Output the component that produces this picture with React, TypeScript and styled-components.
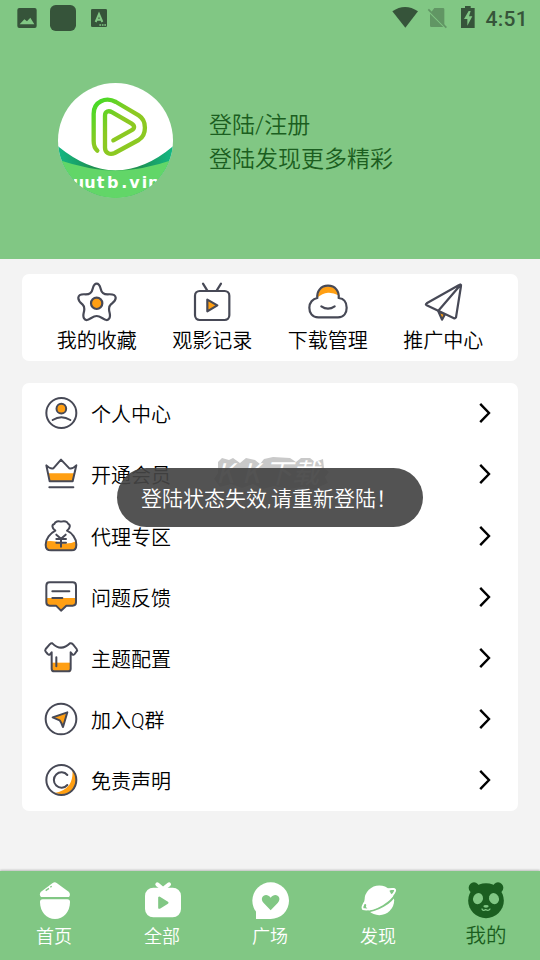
import React from 'react';
import styled, { createGlobalStyle } from 'styled-components';

const green = '#81c784';
const deep = '#1b5e20';
const ink = '#474956';
const orange = '#ff9f13';
const status = '#36543a';

const GlobalStyle = createGlobalStyle`
  * { box-sizing: border-box; }
  html, body { margin: 0; padding: 0; }
  body {
    font-family: Roboto, 'Noto Sans CJK SC', sans-serif;
    font-weight: 350;
    background: #f3f3f3;
    overflow: hidden;
  }
`;

const Screen = styled.div`
  position: relative;
  width: 540px;
  height: 960px;
  display: flex;
  flex-direction: column;
  background: #f3f3f3;
`;

const Header = styled.header`
  height: 259px;
  flex: none;
  background: ${green};
`;

const StatusBar = styled.div`
  height: 36px;
  padding: 0 12px 0 17px;
  display: flex;
  align-items: center;
  justify-content: space-between;
`;

const StatusGroup = styled.div`
  display: flex;
  align-items: center;
`;

const Clock = styled.span`
  margin-left: 10px;
  font: 500 21px/36px Roboto, sans-serif;
  letter-spacing: 0.3px;
  color: ${status};
  padding-top: 2px;
`;

const Profile = styled.div`
  display: flex;
  align-items: center;
  padding: 47px 0 0 58px;
  gap: 36px;
`;

const ProfileText = styled.div`
  font-size: 23px;
  line-height: 34px;
  color: ${deep};
  padding-top: 4px;
`;

const Card = styled.section`
  margin: 0 22px;
  background: #fff;
  border-radius: 7px;
  flex: none;
`;

const QuickCard = styled(Card)`
  margin-top: 14.5px;
  height: 87.5px;
  padding: 8.5px 17px 0;
  display: grid;
  grid-template-columns: repeat(4, 1fr);
`;

const QuickItem = styled.div`
  display: flex;
  flex-direction: column;
  align-items: center;
  font-size: 20px;
  line-height: 28px;
  color: #000;
  gap: 5px;
`;

const MenuCard = styled(Card)`
  margin-top: 21.7px;
  height: 428px;
  display: flex;
  flex-direction: column;
`;

const MenuRow = styled.div`
  flex: 1;
  display: flex;
  align-items: center;
  padding: 0 26px 0 21px;
`;

const MenuLabel = styled.span`
  flex: 1;
  margin-left: 12px;
  font-size: 20px;
  line-height: 30px;
  color: #000;
  padding-top: 4px;
`;

const Watermark = styled.svg`
  position: absolute;
  left: 211px;
  top: 455px;
`;

const Toast = styled.div`
  position: absolute;
  left: 117px;
  top: 468px;
  width: 306px;
  height: 59px;
  padding-left: 24px;
  border-radius: 30px;
  background: rgba(68, 68, 68, 0.92);
  color: #fff;
  font-size: 21px;
  line-height: 62px;
  white-space: nowrap;
`;

const TabBar = styled.nav`
  margin-top: auto;
  height: 89px;
  flex: none;
  display: grid;
  grid-template-columns: repeat(5, 1fr);
  background: ${green};
  box-shadow: 0 -1px 2px rgba(0, 0, 0, 0.22);
`;

const Tab = styled.div<{ $active?: boolean }>`
  display: flex;
  flex-direction: column;
  align-items: center;
  padding-top: 9px;
  font-size: ${(p) => (p.$active ? 20.5 : 18)}px;
  line-height: ${(p) => (p.$active ? 32 : 34)}px;
  color: ${(p) => (p.$active ? deep : '#fff')};
`;

const Line = styled.svg.attrs<{ $w: number }>((p) => ({ strokeWidth: p.$w }))<{ $w: number }>`
  display: block;
  flex: none;
  fill: none;
  stroke: ${ink};
  stroke-linecap: round;
  stroke-linejoin: round;
  .fill { fill: ${orange}; }
  .tint { fill: ${orange}; stroke: none; }
`;

const Glyph = styled.svg`
  display: block;
  flex: none;
`;

const QuickIcon = ({ children }: { children: React.ReactNode }) => (
  <Line $w={6.6} width="40" height="40" viewBox="0 0 120 120">{children}</Line>
);
const MenuIcon = ({ children }: { children: React.ReactNode }) => (
  <Line $w={6} width="36" height="36" viewBox="0 0 108 108">{children}</Line>
);
const TabIcon = ({ children }: { children: React.ReactNode }) => (
  <Glyph width="40" height="40" viewBox="0 0 120 120" fill="currentColor">{children}</Glyph>
);

const Avatar = () => (
  <Glyph width="115" height="115" viewBox="0 0 345 345">
    <defs>
      <clipPath id="disc"><circle cx="172.5" cy="172.5" r="172.5" /></clipPath>
      <clipPath id="word"><rect x="46" y="270" width="257" height="48" /></clipPath>
      <linearGradient id="mark" x1="0" y1="0" x2="0.7" y2="0.8">
        <stop offset="0" stopColor="#3fdc28" />
        <stop offset="0.6" stopColor="#8cc922" />
        <stop offset="1" stopColor="#8cc922" />
      </linearGradient>
      <linearGradient id="ribbon" x1="0" y1="0" x2="1" y2="0">
        <stop offset="0" stopColor="#14b884" />
        <stop offset="0.32" stopColor="#1e8e50" />
        <stop offset="0.5" stopColor="#4fc45c" />
        <stop offset="0.68" stopColor="#1e8e50" />
        <stop offset="1" stopColor="#14b884" />
      </linearGradient>
    </defs>
    <g clipPath="url(#disc)">
      <rect width="345" height="345" fill="#fff" />
      <path d="M0 190Q88 262 172 262Q260 262 345 190V345H0Z" fill="url(#ribbon)" />
      <path d="M0 230Q90 260 172 264Q258 260 345 230V345H0Z" fill="#62d668" />
      <g clipPath="url(#word)">
        <text x="44 79 116 147 190 214 251 270" y="316" fontFamily="'DejaVu Sans', sans-serif" fontWeight="700" fontSize="48" fill="#fff">uutb.vip</text>
      </g>
    </g>
    <path d="M118 203C109 195 107 188 107 174V92C107 56 143 40 174 57L242 97C267 113 267 155 242 171L170 210C155 217 141 209 141 194V98C141 84 152 82 163 88L220 121C231 128 231 136 220 142L166 172" fill="none" stroke="url(#mark)" strokeWidth="13" strokeLinejoin="round" strokeLinecap="round" />
  </Glyph>
);

const quick = [
  {
    label: '我的收藏',
    icon: (
      <>
        <path d="M59 5C66 5 68 9 71 20C74 34 80 37 92 37C104 36 115 37 116 47C117 57 108 62 101 68C94 74 95 82 98 93C101 106 96 115 88 114C80 113 70 102 59 102C48 102 38 113 30 114C22 115 17 106 20 93C23 82 24 74 17 68C10 62 3 57 4 47C5 37 14 36 26 37C38 37 44 34 47 20C50 9 52 5 59 5Z" />
        <circle className="fill" cx="59" cy="64" r="17" />
      </>
    ),
  },
  {
    label: '观影记录',
    icon: (
      <>
        <rect x="9" y="27" width="103" height="87" rx="14" />
        <path d="M33 5L46 26M87 5L74 26" />
        <path className="fill" d="M46 53V88L76 70Z" />
      </>
    ),
  },
  {
    label: '下载管理',
    icon: (
      <>
        <path className="tint" d="M29 46C31 24 40 13 60 13C80 13 89 24 91 40Q76 31 60 32Q42 34 29 46Z" />
        <path d="M31 106C12 106 4 92 4 77C4 62 14 50 28 48C26 28 38 11 60 11C82 11 94 28 92 48C108 50 116 62 116 77C116 92 108 106 90 106Z" />
        <path d="M40 73Q60 87 80 73" />
      </>
    ),
  },
  {
    label: '推广中心',
    icon: (
      <>
        <path className="fill" d="M46 88L57 113L66 97Z" />
        <path fill="#fff" d="M113 8Q111 7 107 10L11 64Q6 67 11 70L93 109Q97 110 99 106L114 12Q115 9 113 8L46 86" />
      </>
    ),
  },
];

const menu = [
  {
    label: '个人中心',
    icon: (
      <>
        <circle cx="55" cy="54" r="45" />
        <circle className="fill" cx="55" cy="41" r="14.5" />
        <path d="M29 75Q55 59 82 75" />
      </>
    ),
  },
  {
    label: '开通会员',
    icon: (
      <>
        <path className="tint" d="M16 52H95L89 75H21Z" />
        <path d="M10 28L20 76H89L100 28Q88 40 79 37L54 11L31 37Q22 40 10 28ZM19 94H91" />
      </>
    ),
  },
  {
    label: '代理专区',
    icon: (
      <>
        <path className="tint" d="M9 70Q31 66 54 75Q78 80 99 70Q104 96 86 97H24Q5 96 9 70Z" />
        <path d="M37 38C26 30 26 20 34 18C36 10 46 8 54 11C64 8 74 10 75 17C83 20 82 30 72 38C86 44 101 62 100 80C100 92 95 97 86 97H24C14 97 8 92 8 80C8 62 22 46 37 38Z" />
        <path d="M40 50L54 62L68 50M54 62V86M40 63H69M40 74H69" />
      </>
    ),
  },
  {
    label: '问题反馈',
    icon: (
      <>
        <path className="tint" d="M10 57H99V72Q99 80 91 80H70L54 95L39 80H18Q10 80 10 72Z" />
        <path d="M20 10H89Q99 10 99 20V70Q99 80 89 80H70L54 95L39 80H20Q10 80 10 70V20Q10 10 20 10ZM28 37H79M28 57H58" />
      </>
    ),
  },
  {
    label: '主题配置',
    icon: (
      <>
        <path className="tint" d="M26 68H83V94H26Z" />
        <path d="M28 10Q54 36 81 10Q86 9 90 13L101 27Q104 31 100 35L95 42Q92 46 88 43L83 37V86Q83 94 75 94H34Q26 94 26 86V37L21 43Q17 46 14 42L8 35Q5 31 8 27L20 13Q24 9 28 10ZM40 52V79" />
      </>
    ),
  },
  {
    label: '加入Q群',
    icon: (
      <>
        <circle cx="54" cy="54" r="46" />
        <path className="fill" d="M29 49L73 34L60 78L55 66L50 58Z" />
      </>
    ),
  },
  {
    label: '免责声明',
    icon: (
      <>
        <path className="tint" d="M88 22Q109 43 95 75Q76 105 34 93Q63 89 79 68Q91 50 88 22Z" />
        <circle cx="55" cy="54" r="45" />
        <path d="M73 39A23 23 0 1 0 73 69" />
      </>
    ),
  },
];

const tabs = [
  {
    label: '首页',
    icon: (
      <>
        <path d="M56 9Q62 5 68 9L104 35Q111 43 105 51H21Q14 43 21 35Z" />
        <path d="M18 66Q18 58 26 58H100Q108 58 108 66C108 96 88 117 63 117C38 117 18 96 18 66Z" />
        <path d="M35 32L45 25M49 22L53 19" stroke={green} strokeWidth="4" />
      </>
    ),
  },
  {
    label: '全部',
    icon: (
      <>
        <rect x="9" y="23" width="108" height="89" rx="25" />
        <path d="M46 13L63 27L81 13" fill="none" stroke="currentColor" strokeWidth="12" strokeLinecap="round" />
        <path d="M52 53V83L76 68Z" fill={green} stroke={green} strokeWidth="7" strokeLinejoin="round" />
      </>
    ),
  },
  {
    label: '广场',
    icon: (
      <>
        <circle cx="62" cy="62" r="55" />
        <path d="M18 62V117H62Z" />
        <path d="M62 91L41 69C25 51 49 34 62 53C75 34 99 51 83 69Z" fill={green} />
      </>
    ),
  },
  {
    label: '发现',
    icon: (
      <>
        <circle cx="64" cy="61" r="44.5" />
        <path d="M20 95Q47 95 76 78Q103 62 113 42" fill="none" stroke={green} strokeWidth="6" />
        <path d="M24 62Q9 82 15 87Q40 93 76 68Q106 48 111 33Q114 24 91 28" fill="none" stroke="currentColor" strokeWidth="6" strokeLinecap="round" />
        <ellipse cx="21" cy="78" rx="3" ry="6" fill={green} transform="rotate(25 21 78)" />
        <path d="M94 32Q107 29 106 33Q104 40 100 43Z" fill={green} />
      </>
    ),
  },
  {
    label: '我的',
    icon: (
      <>
        <ellipse cx="60" cy="62" rx="53.5" ry="52.5" />
        <circle cx="24" cy="23" r="16" />
        <circle cx="96" cy="23" r="16" />
        <g fill={green}>
          <ellipse cx="36" cy="56" rx="14.5" ry="17" transform="rotate(25 36 56)" />
          <ellipse cx="84" cy="56" rx="14.5" ry="17" transform="rotate(-25 84 56)" />
          <ellipse cx="60" cy="79" rx="8" ry="4" />
        </g>
        <path d="M48 87Q51 94 59 89Q68 94 72 87" fill="none" stroke={green} strokeWidth="4" strokeLinecap="round" />
      </>
    ),
  },
];

export default function App() {
  return (
    <Screen>
      <GlobalStyle />
      <Header>
        <StatusBar>
          <StatusGroup>
            <Glyph width="100" height="36" viewBox="0 0 300 108" fill={status}>
              <rect x="1" y="24" width="58" height="60" rx="6" />
              <path d="M8 73L22 58L30 64L40 53L52 73Z" fill={green} />
              <rect x="99" y="15" width="78" height="78" rx="17" />
              <rect x="222" y="27" width="48" height="54" rx="4" />
              <path d="M236 66L246 42L256 66M240 59H252" fill="none" stroke={green} strokeWidth="6" />
              <path d="M247 75H267" stroke={green} strokeWidth="4" strokeDasharray="5 2.5" />
            </Glyph>
          </StatusGroup>
          <StatusGroup>
            <Glyph width="84" height="36" viewBox="0 0 252 108" fill={status}>
              <path d="M4 34Q42 8 81 34L43 83Z" />
              <g opacity="0.42">
                <path d="M130 24H156Q160 24 160 28V76L121 36ZM117 41L157 81H121Q117 81 117 77Z" />
                <path d="M112 28L166 83" stroke={status} strokeWidth="5" />
              </g>
              <path d="M222 18H239V24H251V84H210V24H222Z" />
              <path d="M233 33L219 57H229V77L244 49H234L239 33Z" fill={green} />
            </Glyph>
            <Clock>4:51</Clock>
          </StatusGroup>
        </StatusBar>
        <Profile>
          <Avatar />
          <ProfileText>
            <div>登陆/注册</div>
            <div>登陆发现更多精彩</div>
          </ProfileText>
        </Profile>
      </Header>

      <QuickCard>
        {quick.map((q) => (
          <QuickItem key={q.label}>
            <QuickIcon>{q.icon}</QuickIcon>
            <span>{q.label}</span>
          </QuickItem>
        ))}
      </QuickCard>

      <MenuCard>
        {menu.map((m) => (
          <MenuRow key={m.label}>
            <MenuIcon>{m.icon}</MenuIcon>
            <MenuLabel>{m.label}</MenuLabel>
            <Glyph width="14" height="22" viewBox="0 0 14 22" fill="none" stroke="#000" strokeWidth="2.4">
              <path d="M2.2 1.8L11 11L2.2 20.2" />
            </Glyph>
          </MenuRow>
        ))}
      </MenuCard>

      <Watermark width="120" height="36" viewBox="0 0 120 36">
        <path d="M7 7L11 3L18 5L22 3L29 8L35 3L44 5L49 9L53 4L62 2L79 3L85 7L90 3L99 3L104 7L112 4L113 13L118 17L114 22L117 28L110 31L105 35L91 32L78 34L63 31L52 34L42 29L31 33L20 29L9 32L3 24L7 18Z" fill="#c9c9c9" />
        <text x="5 31 54 81" y="28" fontFamily="'Noto Sans CJK SC', sans-serif" fontSize="27" fontStyle="italic" fontWeight="400" fill="#fff">KK下载</text>
      </Watermark>
      <Toast>登陆状态失效,请重新登陆！</Toast>

      <TabBar>
        {tabs.map((t) => (
          <Tab key={t.label} $active={t.label === '我的'}>
            <TabIcon>{t.icon}</TabIcon>
            <span>{t.label}</span>
          </Tab>
        ))}
      </TabBar>
    </Screen>
  );
}
